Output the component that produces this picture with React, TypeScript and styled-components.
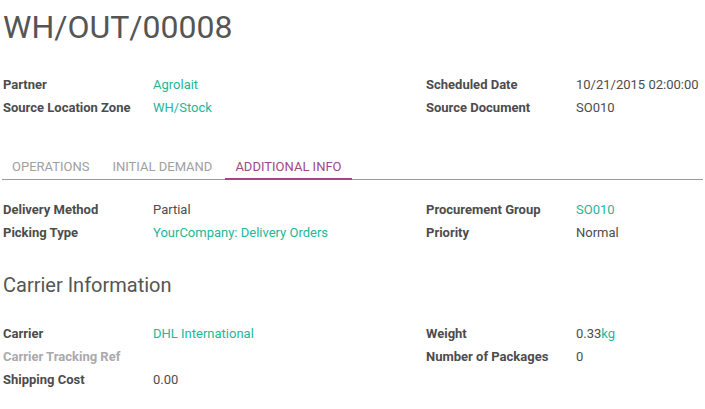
import React from "react";
import styled, { createGlobalStyle } from "styled-components";

const Global = createGlobalStyle`
  html, body { margin: 0; padding: 0; background: #ffffff; }
  body { font-family: Roboto, "Noto Sans", "Liberation Sans", sans-serif; color: #4c4c4c; }
`;

const Sheet = styled.div`
  padding: 7px 2px 0 2px;
  width: 705px;
  box-sizing: border-box;
`;

const Title = styled.h1`
  margin: 0 0 0 1px;
  font-size: 32px;
  line-height: 40px;
  font-weight: 400;
  color: #555555;
`;

const GroupRow = styled.div<{ $top: number }>`
  display: grid;
  grid-template-columns: 423px 1fr;
  margin-top: ${(p) => p.$top}px;
  padding-left: 1px;
`;

const Group = styled.div`
  display: grid;
  grid-template-columns: 150px 1fr;
  grid-auto-rows: 23px;
  align-content: start;
`;

const Label = styled.div<{ $muted?: boolean }>`
  font-size: 13px;
  line-height: 23px;
  font-weight: 700;
  color: ${(p) => (p.$muted ? "#aaaaaa" : "#4c4c4c")};
  white-space: nowrap;
`;

const Value = styled.div`
  font-size: 13px;
  line-height: 23px;
  color: #4c4c4c;
  white-space: nowrap;
`;

const Link = styled.span`
  color: #21b799;
`;

const Tabs = styled.div`
  display: flex;
  gap: 3px;
  margin-top: 40px;
  border-bottom: 1px solid #9a9a9a;
`;

const Tab = styled.div<{ $active?: boolean }>`
  padding: 0 10px;
  font-size: 13px;
  line-height: 16px;
  height: 20px;
  text-transform: uppercase;
  color: ${(p) => (p.$active ? "#a24689" : "#a0a0a0")};
  box-shadow: ${(p) => (p.$active ? "inset 0 -1px 0 #a24689" : "none")};
  margin-bottom: -1px;
  border-bottom: 1px solid ${(p) => (p.$active ? "#a24689" : "transparent")};
`;

const Section = styled.h2`
  margin: 0 0 0 1px;
  font-size: 20px;
  font-weight: 400;
  line-height: 28px;
  color: #555555;
`;

const SectionWrap = styled.div`
  margin-top: 27px;
`;

type Field = { label: string; value?: React.ReactNode; muted?: boolean };

const FieldGroup: React.FC<{ fields: Field[] }> = ({ fields }) => (
  <Group>
    {fields.map((f) => (
      <React.Fragment key={f.label}>
        <Label $muted={f.muted}>{f.label}</Label>
        <Value>{f.value}</Value>
      </React.Fragment>
    ))}
  </Group>
);

export default function App() {
  return (
    <>
      <Global />
      <Sheet>
        <Title>WH/OUT/00008</Title>
        <GroupRow $top={26}>
          <FieldGroup
            fields={[
              { label: "Partner", value: <Link>Agrolait</Link> },
              { label: "Source Location Zone", value: <Link>WH/Stock</Link> },
            ]}
          />
          <FieldGroup
            fields={[
              { label: "Scheduled Date", value: "10/21/2015 02:00:00" },
              { label: "Source Document", value: "SO010" },
            ]}
          />
        </GroupRow>
        <Tabs>
          <Tab>Operations</Tab>
          <Tab>Initial Demand</Tab>
          <Tab $active>Additional Info</Tab>
        </Tabs>
        <GroupRow $top={18}>
          <FieldGroup
            fields={[
              { label: "Delivery Method", value: "Partial" },
              { label: "Picking Type", value: <Link>YourCompany: Delivery Orders</Link> },
            ]}
          />
          <FieldGroup
            fields={[
              { label: "Procurement Group", value: <Link>SO010</Link> },
              { label: "Priority", value: "Normal" },
            ]}
          />
        </GroupRow>
        <SectionWrap>
          <Section>Carrier Information</Section>
        </SectionWrap>
        <GroupRow $top={23}>
          <FieldGroup
            fields={[
              { label: "Carrier", value: <Link>DHL International</Link> },
              { label: "Carrier Tracking Ref", muted: true },
              { label: "Shipping Cost", value: "0.00" },
            ]}
          />
          <FieldGroup
            fields={[
              {
                label: "Weight",
                value: (
                  <>
                    0.33<Link>kg</Link>
                  </>
                ),
              },
              { label: "Number of Packages", value: "0" },
            ]}
          />
        </GroupRow>
      </Sheet>
    </>
  );
}
